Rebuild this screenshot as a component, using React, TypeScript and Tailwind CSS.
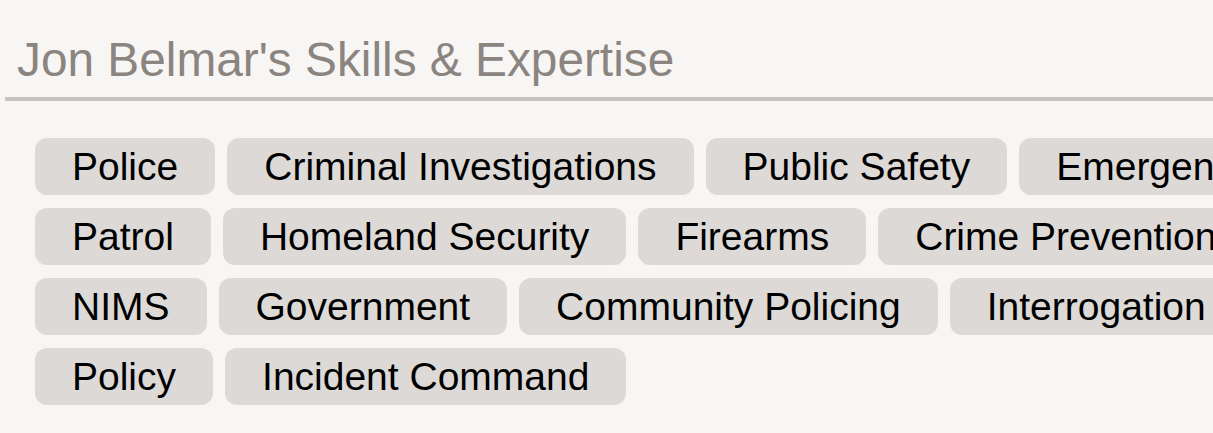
const rows: string[][] = [
  ["Police", "Criminal Investigations", "Public Safety", "Emergency Management"],
  ["Patrol", "Homeland Security", "Firearms", "Crime Prevention"],
  ["NIMS", "Government", "Community Policing", "Interrogation"],
  ["Policy", "Incident Command"],
]

const Tag = ({ label }: { label: string }) => {
  return (
    <div className="flex h-[57px] shrink-0 items-center whitespace-nowrap rounded-[12px] bg-[#dcd9d6] px-[37px] text-[39px] leading-none text-black">
      {label}
    </div>
  )
}

export default function App() {
  return (
    <div
      className="h-[433px] w-[1213px] overflow-hidden bg-[#f7f6f5]"
      style={{ fontFamily: '"Liberation Sans", Arial, sans-serif' }}
    >
      <div className="pt-[32px]">
        <h1 className="pl-[17px] text-[47.8px] leading-[55px] font-normal text-[#8b847f]">
          Jon Belmar's Skills &amp; Expertise
        </h1>
        <div className="mt-[10px] ml-[5px] h-[4px] bg-[#c8c3bf]" />
      </div>
      <div className="flex flex-col gap-[13px] pt-[37px] pl-[35px]">
        {rows.map((row, i) => (
          <div key={i} className="flex gap-[12px]">
            {row.map((label) => (
              <Tag key={label} label={label} />
            ))}
          </div>
        ))}
      </div>
    </div>
  )
}
